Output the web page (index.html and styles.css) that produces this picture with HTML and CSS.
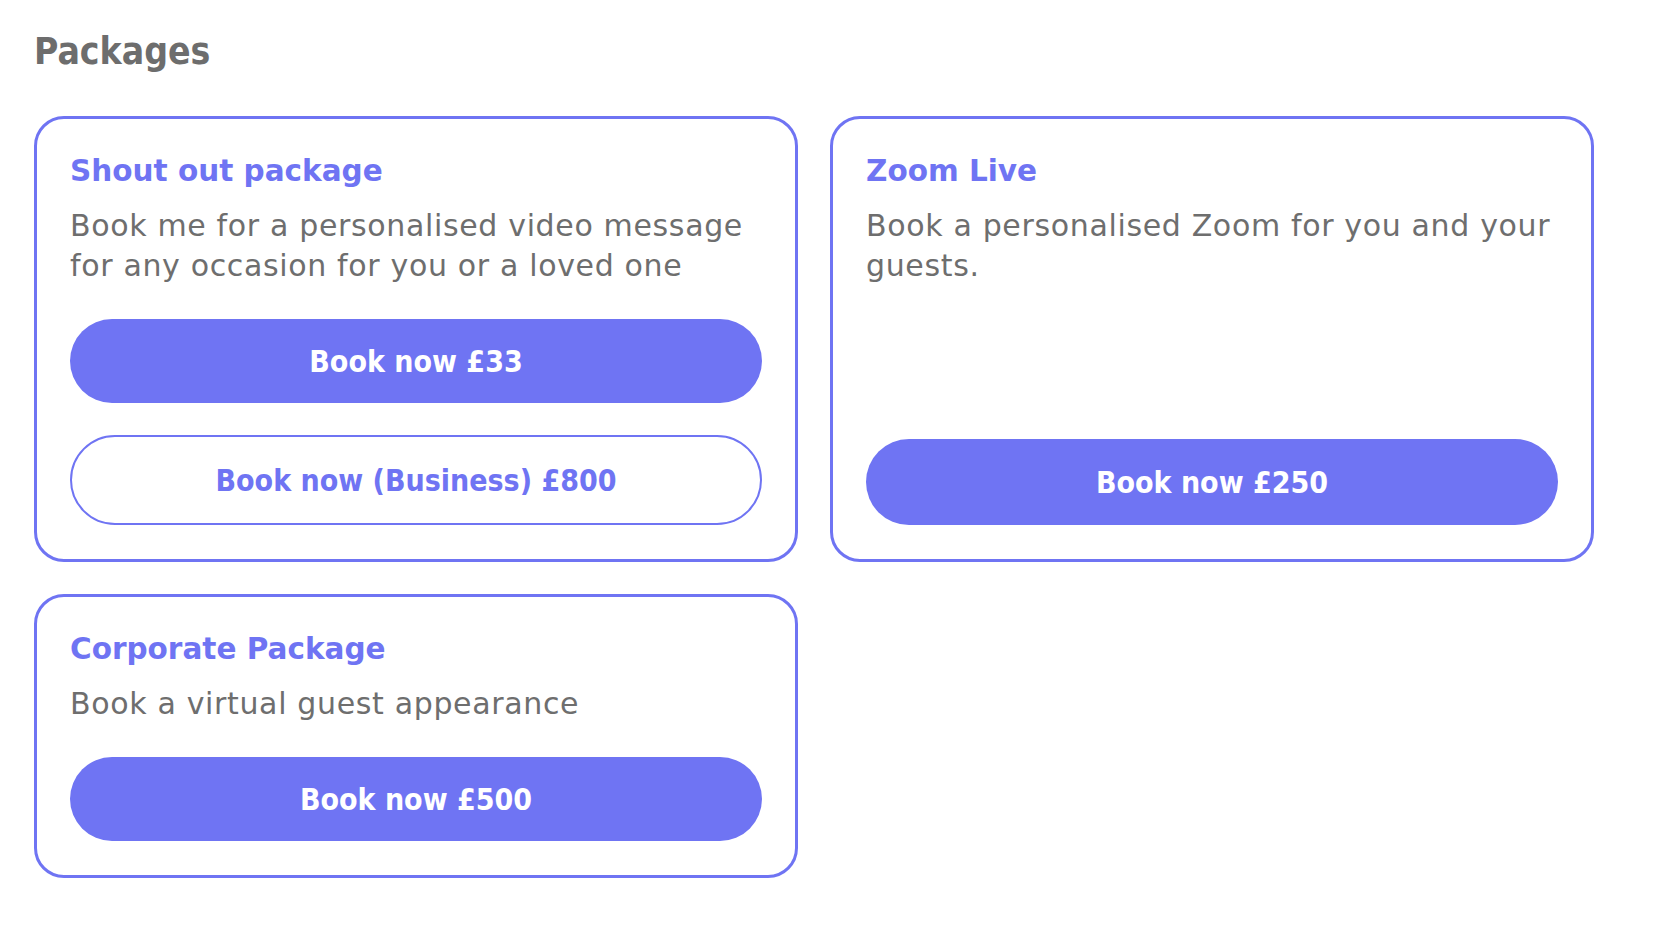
FILE: index.html
```html
<!DOCTYPE html>
<html lang="en">
<head>
<meta charset="utf-8">
<title>Packages</title>
<link rel="stylesheet" href="styles.css">
</head>
<body>
<main class="page">
  <h2 class="page-title">Packages</h2>
  <div class="packages">
    <section class="card">
      <h3 class="card-title">Shout out package</h3>
      <p class="card-desc">Book me for a personalised video message for any occasion for you or a loved one</p>
      <div class="card-actions">
        <a class="btn btn-primary" href="#">Book now £33</a>
        <a class="btn btn-outline" href="#">Book now (Business) £800</a>
      </div>
    </section>
    <section class="card">
      <h3 class="card-title">Zoom Live</h3>
      <p class="card-desc">Book a personalised Zoom for you and your guests.</p>
      <div class="card-actions">
        <a class="btn btn-primary btn-tall" href="#">Book now £250</a>
      </div>
    </section>
    <section class="card">
      <h3 class="card-title">Corporate Package</h3>
      <p class="card-desc">Book a virtual guest appearance</p>
      <div class="card-actions">
        <a class="btn btn-primary" href="#">Book now £500</a>
      </div>
    </section>
  </div>
</main>
</body>
</html>
```
FILE: styles.css
```css
* {
  box-sizing: border-box;
}

html, body {
  margin: 0;
  padding: 0;
  background: #ffffff;
}

body {
  font-family: "DejaVu Sans", "Liberation Sans", sans-serif;
  color: #6e6e6e;
}

.page {
  padding: 32px 0 0 34px;
}

.page-title {
  margin: 0 0 44px 0;
  font-family: "DejaVu Sans Condensed", "DejaVu Sans", sans-serif;
  font-stretch: condensed;
  font-size: 37px;
  line-height: 40px;
  font-weight: 700;
  color: #6d6d6d;
}

.packages {
  display: grid;
  grid-template-columns: repeat(2, 764px);
  column-gap: 32px;
  row-gap: 32px;
  align-items: stretch;
}

.card {
  display: flex;
  flex-direction: column;
  border: 3px solid #6f74f3;
  border-radius: 30px;
  padding: 33px 33px 34px 33px;
  background: #ffffff;
}

.card-title {
  margin: 0;
  font-size: 29.5px;
  line-height: 38px;
  font-weight: 700;
  color: #6f74f3;
}

.card-desc {
  margin: 16px 0 0 0;
  font-size: 30px;
  line-height: 40px;
  letter-spacing: 0.65px;
  color: #6e6e6e;
}

.card-actions {
  margin-top: auto;
  padding-top: 33px;
  display: flex;
  flex-direction: column;
  gap: 32px;
}

.btn {
  display: flex;
  align-items: center;
  justify-content: center;
  height: 84px;
  border-radius: 50px;
  font-family: "DejaVu Sans Condensed", "DejaVu Sans", sans-serif;
  font-stretch: condensed;
  font-size: 30px;
  font-weight: 700;
  text-decoration: none;
}

.btn-primary {
  background: #6f74f3;
  color: #ffffff;
}

.btn-tall {
  height: 86px;
}

.btn-outline {
  height: 90px;
  background: #ffffff;
  border: 2px solid #6f74f3;
  color: #6f74f3;
}
```
